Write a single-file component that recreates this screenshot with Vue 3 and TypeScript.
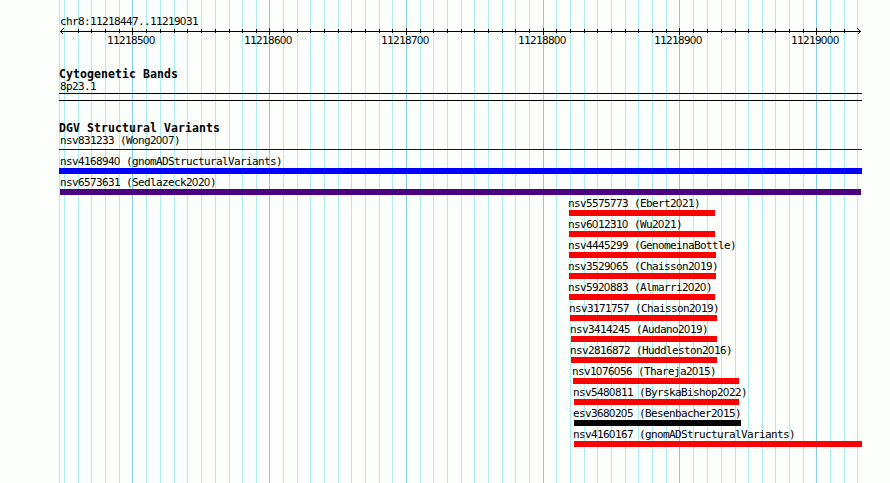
<script setup lang="ts">
import { h, type FunctionalComponent } from 'vue'

interface Variant {
  name: string
  start: number
  end: number
  kind: 'blue' | 'indigo' | 'red' | 'black'
}

const WIDTH = 890
const HEIGHT = 483

const minor: number[] = [
  59, 64, 78, 91, 105, 119, 146, 160, 174, 187, 201, 215, 229, 242, 256, 283, 297, 310, 324, 338,
  351, 365, 379, 392, 420, 433, 447, 461, 474, 488, 502, 515, 529, 556, 570, 584, 597, 611, 625,
  638, 652, 666, 693, 707, 721, 735, 748, 762, 775, 789, 803, 830, 844, 857,
]
const major = [
  { x: 132, label: '11218500' },
  { x: 269, label: '11218600' },
  { x: 406, label: '11218700' },
  { x: 543, label: '11218800' },
  { x: 679, label: '11218900' },
  { x: 816, label: '11219000' },
]
const ticks = minor.filter((x) => x > 64 && x < 857)

const variants: Variant[] = [
  { name: 'nsv4168940 (gnomADStructuralVariants)', start: 59, end: 862, kind: 'blue' },
  { name: 'nsv6573631 (Sedlazeck2020)', start: 60, end: 861, kind: 'indigo' },
  { name: 'nsv5575773 (Ebert2021)', start: 569, end: 715, kind: 'red' },
  { name: 'nsv6012310 (Wu2021)', start: 569, end: 715, kind: 'red' },
  { name: 'nsv4445299 (GenomeinaBottle)', start: 569, end: 716, kind: 'red' },
  { name: 'nsv3529065 (Chaisson2019)', start: 569, end: 716, kind: 'red' },
  { name: 'nsv5920883 (Almarri2020)', start: 569, end: 715, kind: 'red' },
  { name: 'nsv3171757 (Chaisson2019)', start: 570, end: 717, kind: 'red' },
  { name: 'nsv3414245 (Audano2019)', start: 571, end: 717, kind: 'red' },
  { name: 'nsv2816872 (Huddleston2016)', start: 571, end: 717, kind: 'red' },
  { name: 'nsv1076056 (Thareja2015)', start: 573, end: 739, kind: 'red' },
  { name: 'nsv5480811 (ByrskaBishop2022)', start: 574, end: 739, kind: 'red' },
  { name: 'esv3680205 (Besenbacher2015)', start: 574, end: 741, kind: 'black' },
  { name: 'nsv4160167 (gnomADStructuralVariants)', start: 574, end: 862, kind: 'red' },
]

// Labels use an open zero, so runs of zeros get their own face.
const Label: FunctionalComponent<{ text: string }> = (props) =>
  h(
    'span',
    { class: 'label' },
    props.text
      .split(/(0+)/)
      .filter((part) => part !== '')
      .map((part) => (part[0] === '0' ? h('span', { class: 'zero' }, part) : part)),
  )
Label.props = ['text']
</script>

<template>
  <main class="browser">
    <svg class="grid" :width="WIDTH" :height="HEIGHT" shape-rendering="crispEdges" aria-hidden="true">
      <rect v-for="x in minor" :key="x" class="minor" :x="x" y="0" width="1" :height="HEIGHT" />
      <rect v-for="m in major" :key="m.x" class="major" :x="m.x" y="0" width="1" :height="HEIGHT" />
    </svg>

    <div class="tracks">
      <header class="scale">
        <div class="range"><Label text="chr8:11218447..11219031" /></div>
        <svg class="axis" :width="WIDTH" height="7" viewBox="0 28 890 7" shape-rendering="crispEdges">
          <rect x="60" y="31" width="801" height="1" />
          <rect v-for="x in ticks" :key="x" :x="x" y="29" width="1" height="4" />
          <rect v-for="m in major" :key="m.x" :x="m.x" y="28" width="1" height="7" />
          <path class="arrow" d="M63.5 28.5L60.5 31.5L63.5 34.5M857.5 28.5L860.5 31.5L857.5 34.5" />
        </svg>
        <div class="numbers">
          <div v-for="m in major" :key="m.x" class="number"><Label :text="m.label" /></div>
        </div>
      </header>

      <section class="cyto">
        <h2>Cytogenetic Bands</h2>
        <div class="row-label"><Label text="8p23.1" /></div>
        <div class="band"></div>
      </section>

      <section class="dgv">
        <h2>DGV Structural Variants</h2>
        <div class="row-label"><Label text="nsv831233 (Wong2007)" /></div>
        <div class="thin-track"><div class="thin"></div></div>
        <div
          v-for="v in variants"
          :key="v.name"
          class="variant"
          :style="{ marginLeft: v.start + 'px' }"
        >
          <div class="row-name" :class="{ wide: v.start === 59, inset: v.start > 60 }">
            <Label :text="v.name" />
          </div>
          <div class="bar" :class="v.kind" :style="{ width: v.end - v.start + 'px' }"></div>
        </div>
      </section>
    </div>
  </main>
</template>

<style>
body {
  background: #fcfefc;
  overflow: hidden;
}
</style>

<style scoped>
.browser {
  display: grid;
  width: 890px;
  height: 483px;
  overflow: hidden;
  color: #000;
  background: #fcfefc;
}
.grid,
.tracks {
  grid-area: 1 / 1;
  display: block;
}
.tracks {
  z-index: 1;
}
.minor {
  fill: #aceeec;
}
.major {
  fill: #84ceec;
}
:deep(.label) {
  display: block;
  height: 15px;
  font: 11px/15px 'DejaVu Sans Mono', monospace;
  letter-spacing: -0.6224px;
  white-space: pre;
}
:deep(.zero) {
  font-family: 'Liberation Sans', sans-serif;
  line-height: 1;
  letter-spacing: -0.1177px;
}
.scale {
  height: 66px;
  padding-top: 14px;
  box-sizing: border-box;
}
.range {
  height: 14px;
  padding-left: 60px;
}
.axis {
  display: block;
}
.arrow {
  fill: none;
  stroke: #000;
  stroke-width: 1;
}
.numbers {
  display: grid;
  grid-template-columns: 137px 137px 137px 136px 137px 49px;
  margin-top: -2px;
  padding-left: 107px;
}
h2 {
  height: 12px;
  margin: 0 0 0 59px;
  font: bold 11.5px/17px 'DejaVu Sans Mono', monospace;
  letter-spacing: 0.0766px;
  white-space: pre;
}
.row-label,
.row-name {
  height: 15px;
  padding-top: 1px;
  box-sizing: border-box;
}
.row-label {
  padding-left: 60px;
}
.cyto {
  height: 54px;
}
.band {
  width: 803px;
  height: 8px;
  margin-left: 59px;
  box-sizing: border-box;
  border-top: 1px solid #000;
  border-bottom: 1px solid #000;
}
.thin-track {
  height: 6px;
  padding: 2px 0 0 59px;
  box-sizing: border-box;
}
.thin {
  width: 803px;
  height: 1px;
  background: #0000c8;
}
.row-name.wide {
  padding-left: 1px;
}
.row-name.inset {
  margin-left: -1px;
}
.bar {
  height: 6px;
}
.blue {
  background: #0000ff;
}
.indigo {
  background: #4b0082;
}
.red {
  background: #ff0000;
}
.black {
  background: #000;
}
</style>
